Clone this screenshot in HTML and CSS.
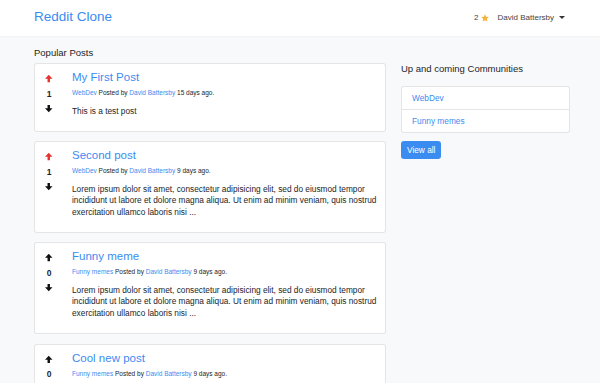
FILE: index.html
```html
<html lang="en">
  <head>
    <meta charset="UTF-8" />
    <meta name="viewport" content="width=device-width, initial-scale=1.0" />
    <title>Reddit Clone</title>
    <link rel="stylesheet" href="styles.css">
  </head>
  <body>
    <nav class="navbar">
      <div class="container nav-inner">
        <a class="brand" href="#">Reddit Clone</a>
        <div class="nav-right">
          <span class="karma">2
            <svg class="star" viewBox="0 0 10 10"><path d="M5 0.4 L6.4 3.4 L9.7 3.8 L7.3 6 L7.9 9.3 L5 7.7 L2.1 9.3 L2.7 6 L0.3 3.8 L3.6 3.4 Z" /></svg>
          </span>
          <span class="user">David Battersby <span class="caret"></span></span>
        </div>
      </div>
    </nav>

    <div class="container main">
      <div class="posts">
        <h2 class="heading">Popular Posts</h2>

        <div class="card">
          <div class="votes">
            <svg class="arrow up active" viewBox="0 0 8 8"><path d="M4 0 L8 4.2 L5.3 4.2 L5.3 8 L2.7 8 L2.7 4.2 L0 4.2 Z" /></svg>
            <span class="count">1</span>
            <svg class="arrow down" viewBox="0 0 8 8"><path d="M4 8 L8 3.8 L5.3 3.8 L5.3 0 L2.7 0 L2.7 3.8 L0 3.8 Z" /></svg>
          </div>
          <div class="post-body">
            <a class="post-title" href="#">My First Post</a>
            <div class="meta"><a href="#">WebDev</a> Posted by <a href="#">David Battersby</a> 15 days ago.</div>
            <p class="excerpt">This is a test post</p>
          </div>
        </div>

        <div class="card">
          <div class="votes">
            <svg class="arrow up active" viewBox="0 0 8 8"><path d="M4 0 L8 4.2 L5.3 4.2 L5.3 8 L2.7 8 L2.7 4.2 L0 4.2 Z" /></svg>
            <span class="count">1</span>
            <svg class="arrow down" viewBox="0 0 8 8"><path d="M4 8 L8 3.8 L5.3 3.8 L5.3 0 L2.7 0 L2.7 3.8 L0 3.8 Z" /></svg>
          </div>
          <div class="post-body">
            <a class="post-title" href="#">Second post</a>
            <div class="meta"><a href="#">WebDev</a> Posted by <a href="#">David Battersby</a> 9 days ago.</div>
            <p class="excerpt">Lorem ipsum dolor sit amet, consectetur adipisicing elit, sed do eiusmod tempor incididunt ut labore et dolore magna aliqua. Ut enim ad minim veniam, quis nostrud exercitation ullamco laboris nisi ...</p>
          </div>
        </div>

        <div class="card">
          <div class="votes">
            <svg class="arrow up" viewBox="0 0 8 8"><path d="M4 0 L8 4.2 L5.3 4.2 L5.3 8 L2.7 8 L2.7 4.2 L0 4.2 Z" /></svg>
            <span class="count">0</span>
            <svg class="arrow down" viewBox="0 0 8 8"><path d="M4 8 L8 3.8 L5.3 3.8 L5.3 0 L2.7 0 L2.7 3.8 L0 3.8 Z" /></svg>
          </div>
          <div class="post-body">
            <a class="post-title" href="#">Funny meme</a>
            <div class="meta"><a href="#">Funny memes</a> Posted by <a href="#">David Battersby</a> 9 days ago.</div>
            <p class="excerpt">Lorem ipsum dolor sit amet, consectetur adipisicing elit, sed do eiusmod tempor incididunt ut labore et dolore magna aliqua. Ut enim ad minim veniam, quis nostrud exercitation ullamco laboris nisi ...</p>
          </div>
        </div>

        <div class="card">
          <div class="votes">
            <svg class="arrow up" viewBox="0 0 8 8"><path d="M4 0 L8 4.2 L5.3 4.2 L5.3 8 L2.7 8 L2.7 4.2 L0 4.2 Z" /></svg>
            <span class="count">0</span>
            <svg class="arrow down" viewBox="0 0 8 8"><path d="M4 8 L8 3.8 L5.3 3.8 L5.3 0 L2.7 0 L2.7 3.8 L0 3.8 Z" /></svg>
          </div>
          <div class="post-body">
            <a class="post-title" href="#">Cool new post</a>
            <div class="meta"><a href="#">Funny memes</a> Posted by <a href="#">David Battersby</a> 9 days ago.</div>
            <p class="excerpt">Lorem ipsum dolor sit amet, consectetur adipisicing elit, sed do eiusmod tempor incididunt ut labore et dolore magna aliqua.</p>
          </div>
        </div>
      </div>

      <div class="sidebar">
        <h2 class="heading side-heading">Up and coming Communities</h2>
        <ul class="list">
          <li><a href="#">WebDev</a></li>
          <li><a href="#">Funny memes</a></li>
        </ul>
        <a class="btn" href="#">View all</a>
      </div>
    </div>
  </body>
</html>
```

FILE: styles.css
```css
body {
  margin: 0;
  background-color: #f8f9fa;
  font-family: "Liberation Sans", Arial, sans-serif;
  font-size: 8.3px;
  color: #212529;
}

a {
  color: #3b8cf0;
  text-decoration: none;
}

.container {
  width: 536px;
  margin-left: 34px;
}

.navbar {
  background-color: white;
  height: 36px;
  box-shadow: 0 1px 2px rgba(0, 0, 0, 0.04);
}

.nav-inner {
  height: 100%;
  display: flex;
  align-items: center;
  justify-content: space-between;
}

.brand {
  font-size: 13.5px;
  margin-top: -4px;
}

.nav-right {
  display: flex;
  align-items: center;
  gap: 9px;
  margin-top: -1px;
  font-size: 8px;
  color: #444;
}

.karma {
  display: flex;
  align-items: center;
  gap: 2px;
}

.star {
  width: 8px;
  height: 8px;
  fill: #f6b23c;
}

.user {
  display: flex;
  align-items: center;
  gap: 5px;
  margin-right: 5px;
}

.caret {
  border-top: 3px solid #333;
  border-left: 3px solid transparent;
  border-right: 3px solid transparent;
}

.main {
  display: flex;
  gap: 15px;
  align-items: flex-start;
}

.posts {
  width: 352px;
}

.sidebar {
  width: 169px;
  padding-top: 16px;
}

.heading {
  font-size: 9.5px;
  font-weight: 500;
  margin: 11px 0 4px;
  line-height: 12px;
}

.side-heading {
  margin-bottom: 11px;
}

.card {
  background-color: white;
  border: 1px solid rgba(0, 0, 0, 0.1);
  border-radius: 3px;
  display: flex;
  padding: 6px 5px 13.5px 0;
  margin-bottom: 9.5px;
}

.votes {
  width: 28px;
  margin-top: 1px;
  display: flex;
  flex-direction: column;
  align-items: center;
  flex-shrink: 0;
}

.votes .arrow,
.votes .count {
  height: 15px;
  display: flex;
  align-items: center;
}

.arrow {
  width: 7.5px;
  padding: 3.5px 0;
  box-sizing: border-box;
  fill: #111;
}

.arrow.active {
  fill: #e3342f;
}

.count {
  font-weight: bold;
  font-size: 8.5px;
}

.post-body {
  margin-left: 9px;
}

.post-title {
  display: block;
  font-size: 11.5px;
  line-height: 15px;
}

.meta {
  font-size: 6.5px;
  margin-top: 3px;
  line-height: 9px;
}

.excerpt {
  margin: 8.5px 0 0;
  line-height: 11.6px;
}

.list {
  list-style: none;
  margin: 0 0 8px;
  padding: 0;
  background-color: white;
  border: 1px solid rgba(0, 0, 0, 0.1);
  border-radius: 3px;
}

.list li {
  padding: 6px 10px;
  line-height: 10px;
}

.list li + li {
  border-top: 1px solid rgba(0, 0, 0, 0.1);
}

.btn {
  display: inline-block;
  background-color: #3b8cf0;
  color: white;
  padding: 4px 6px;
  line-height: 10px;
  border-radius: 3px;
}
```
